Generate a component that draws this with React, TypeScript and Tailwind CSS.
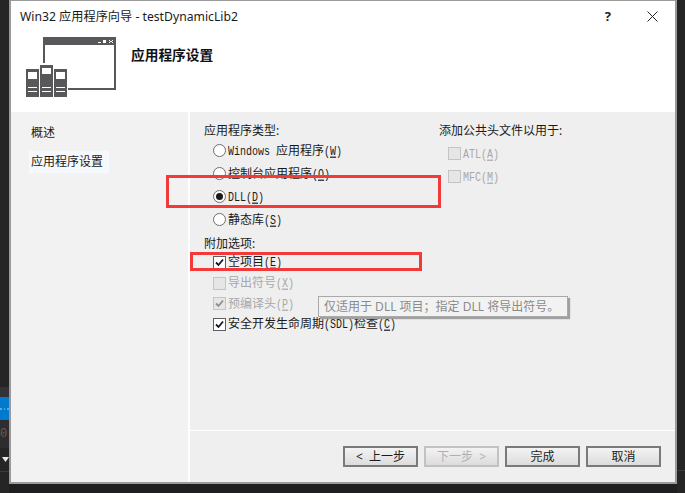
import type { ReactNode } from 'react';

const cjk = "font-['Noto_Sans_CJK_SC',monospace]";
const ui = "font-['Noto_Sans','Noto_Sans_CJK_SC',sans-serif]";

// latin runs in the options are a tall 6px wide mono next to 12px CJK
function L({ children, u }: { children: ReactNode; u?: boolean }) {
  return <span className={`inline-block whitespace-pre scale-y-[1.2] font-['Liberation_Mono',monospace] text-[10px] ${u ? 'underline' : ''}`}>{children}</span>;
}

function Key({ k }: { k: string }) {
  return (
    <>
      <L>(</L>
      <L u>{k}</L>
      <L>)</L>
    </>
  );
}

function Radio({ checked, label }: { checked?: boolean; label: ReactNode }) {
  return (
    <div className="flex items-center gap-[2px] h-[23px]">
      <span className="w-[13px] h-[13px] rounded-full border border-[#6d6d6d] bg-white flex items-center justify-center shrink-0">
        {checked && <span className="w-[7px] h-[7px] rounded-full bg-[#1a1a1a]" />}
      </span>
      <span className={`text-[12px] leading-none text-[#1a1a1a] ${cjk}`}>{label}</span>
    </div>
  );
}

function Check({ checked, disabled, label, h = 'h-[22px]' }: { checked?: boolean; disabled?: boolean; label: ReactNode; h?: string }) {
  return (
    <div className={`flex items-center gap-[2px] ${h}`}>
      <span className={`w-[13px] h-[13px] border flex items-center justify-center shrink-0 ${disabled ? 'border-[#c4c4c4] bg-[#e6e6e6]' : 'border-[#5f5f5f] bg-white'}`}>
        {checked && (
          <svg viewBox="0 0 11 11" className="w-[11px] h-[11px]" fill="none">
            <path d="M2 5.5 L4.5 8 L9 2.5" stroke={disabled ? '#8e8e8e' : '#111827'} strokeWidth="1.8" />
          </svg>
        )}
      </span>
      <span className={`text-[12px] leading-none ${cjk} ${disabled ? 'text-[#a8a8a8]' : 'text-[#1a1a1a]'}`}>{label}</span>
    </div>
  );
}

function WizardIcon() {
  return (
    <svg viewBox="0 0 91 61" className="w-[91px] h-[61px] shrink-0">
      <path d="M17 0H90V53H42V51H88V8H19V26H17Z" fill="#58585a" />
      <path d="M72 5h3v1h-3zM77 3h3v3h-3zM78 4h1v1h-1zM83 3h1v1h-1zM86 3h1v1h-1zM84 4h2v1h-2zM83 5h1v1h-1zM86 5h1v1h-1z" fill="#fff" />
      <rect x="0" y="32" width="13" height="28" fill="#58585a" />
      <rect x="14" y="28" width="13" height="32" fill="#58585a" />
      <rect x="28" y="32" width="13" height="28" fill="#58585a" />
      <rect x="2" y="35" width="9" height="7" fill="#fff" />
      <rect x="16" y="31" width="9" height="6" fill="#fff" />
      <rect x="30" y="35" width="9" height="7" fill="#fff" />
      <path d="M2 50h9v1H2zM2 54h9v1H2zM16 50h9v1h-9zM16 54h9v1h-9zM30 50h9v1h-9zM30 54h9v1h-9z" fill="#fff" />
    </svg>
  );
}

function Btn({ children, disabled }: { children: ReactNode; disabled?: boolean }) {
  return (
    <div className={`w-[75px] h-[21px] border-2 flex items-center justify-center whitespace-pre text-[12px] leading-none bg-gradient-to-b from-[#f3f3f3] to-[#dcdcdc] ${ui} ${disabled ? 'border-[#c2c2c2] text-[#b0b0b0]' : 'border-[#7a7a7a] text-[#1c1c1c]'}`}>
      {children}
    </div>
  );
}

export default function App() {
  return (
    <div className="w-[685px] h-[493px] bg-[#1f1f21] relative overflow-hidden flex">
      {/* editor behind the dialog */}
      <div className="w-[9px] h-full flex flex-col shrink-0">
        <div className="h-[387px] bg-[#252526]" />
        <div className="h-[10px] bg-[#333337]" />
        <div className="h-[23px] bg-[#007acc] flex items-center gap-[2px]">
          <span className="w-[2px] h-[2px] bg-[#5aa9dc]" />
          <span className="w-[2px] h-[2px] bg-[#5aa9dc]" />
          <span className="w-[2px] h-[2px] bg-[#5aa9dc]" />
        </div>
        <div className="h-[28px] bg-[#2d2d30] flex items-center text-[12px] text-[#6b5a4a] font-['Liberation_Mono',monospace]">0</div>
        <div className="h-[23px] bg-[#252526] pt-[9px] pl-[2px]">
          <svg viewBox="0 0 7 5" className="w-[7px] h-[5px]">
            <path d="M0 0H7L3.5 5Z" fill="#e8e8e8" />
          </svg>
        </div>
        <div className="h-[22px] bg-[#252526] border-t border-[#3a3a3c]" />
      </div>

      <div className="w-[668px] h-[484px] shrink-0 border-r-2 border-b-2 border-l-2 border-t border-[#9a9a9a] bg-[#efefef] flex flex-col">
        <div className="h-[111px] bg-white shrink-0 relative">
          <div className={`pl-[9px] pt-[7px] text-[12.2px] leading-[18px] text-[#1a1a1a] ${ui}`}>Win32 应用程序向导 - testDynamicLib2</div>
          <div className="flex items-start pl-[15px] pt-[11px]">
            <WizardIcon />
            <div className={`ml-[14px] mt-[8px] text-[13.7px] font-bold leading-[20px] text-[#111] ${ui}`}>应用程序设置</div>
          </div>
          <span className={`absolute right-[64px] top-[6px] text-[13px] font-bold text-[#222] ${ui}`}>?</span>
          <svg viewBox="0 0 11 11" className="absolute right-[17px] top-[10px] w-[11px] h-[11px]" fill="none">
            <path d="M0.5 0.5 L10.5 10.5 M10.5 0.5 L0.5 10.5" stroke="#222" strokeWidth="1" />
          </svg>
        </div>

        <div className="flex-1 flex min-h-0">
          <div className={`w-[177px] shrink-0 pl-[20px] pt-[11px] bg-[#f2f2f2] text-[12px] text-[#1a1a1a] ${ui}`}>
            <div className="leading-[20px]">概述</div>
            <div className="mt-[8px] -ml-[2px] w-[80px] h-[22px] pl-[2px] leading-[22px] bg-[#f5f8fc]">应用程序设置</div>
          </div>
          <div className="w-[2px] bg-white shrink-0" />
          <div className="flex-1 flex flex-col min-w-0">
            <div className="flex-1 flex pl-[14px] pt-[10px]">
              <div className="w-[235px] shrink-0">
                <div className={`text-[12px] leading-[18px] text-[#1a1a1a] ${ui}`}>应用程序类型:</div>
                <div className="pl-[9px] -mt-[1px]">
                  <Radio label={<><L>Windows </L>应用程序<Key k="W" /></>} />
                  <Radio label={<>控制台应用程序<Key k="O" /></>} />
                  <Radio checked label={<><L>DLL</L><Key k="D" /></>} />
                  <Radio label={<>静态库<Key k="S" /></>} />
                </div>
                <div className={`text-[12px] leading-[16px] mt-[5px] text-[#1a1a1a] ${ui}`}>附加选项:</div>
                <div className="pl-[9px]">
                  <Check checked label={<>空项目<Key k="E" /></>} h="h-[20px]" />
                  <Check disabled label={<>导出符号<Key k="X" /></>} />
                  <Check disabled checked label={<>预编译头<Key k="P" /></>} h="h-[19px]" />
                  <Check checked label={<>安全开发生命周期<L>(SDL)</L>检查<Key k="C" /></>} />
                </div>
              </div>
              <div>
                <div className={`text-[12px] leading-[18px] text-[#1a1a1a] ${ui}`}>添加公共头文件以用于:</div>
                <div className="pl-[9px] mt-[2px]">
                  <Check disabled label={<><L>ATL</L><Key k="A" /></>} h="h-[23px]" />
                  <Check disabled label={<><L>MFC</L><Key k="M" /></>} h="h-[23px]" />
                </div>
              </div>
            </div>
            <div className="h-[1px] bg-white shrink-0" />
            <div className="h-[51px] shrink-0 pt-[15px] pl-[153px] flex gap-[6px]">
              <Btn>{'<  上一步'}</Btn>
              <Btn disabled>{'下一步  >'}</Btn>
              <Btn>完成</Btn>
              <Btn>取消</Btn>
            </div>
          </div>
        </div>
      </div>

      <div className="flex-1 flex flex-col">
        <div className="h-[471px] bg-[#252526] border-b border-[#3a3a3c]" />
        <div className="flex-1 bg-[#252526]" />
      </div>

      {/* annotations and tooltip over the dialog */}
      <div className="absolute left-[166px] top-[175px] w-[275px] h-[33px] border-[3px] border-[#f23a3a]" />
      <div className="absolute left-[190px] top-[252px] w-[232px] h-[19px] border-[3px] border-[#f23a3a]" />
      <div className={`absolute left-[318px] top-[296px] w-[250px] h-[21px] bg-[#f2f2f2] border border-[#a9a9a9] shadow-[2px_2px_1px_#a0a0a0] pl-[5px] text-[12px] leading-[19px] text-[#8a8a8a] ${ui}`}>
        仅适用于 DLL 项目；指定 DLL 将导出符号。
      </div>
    </div>
  );
}
